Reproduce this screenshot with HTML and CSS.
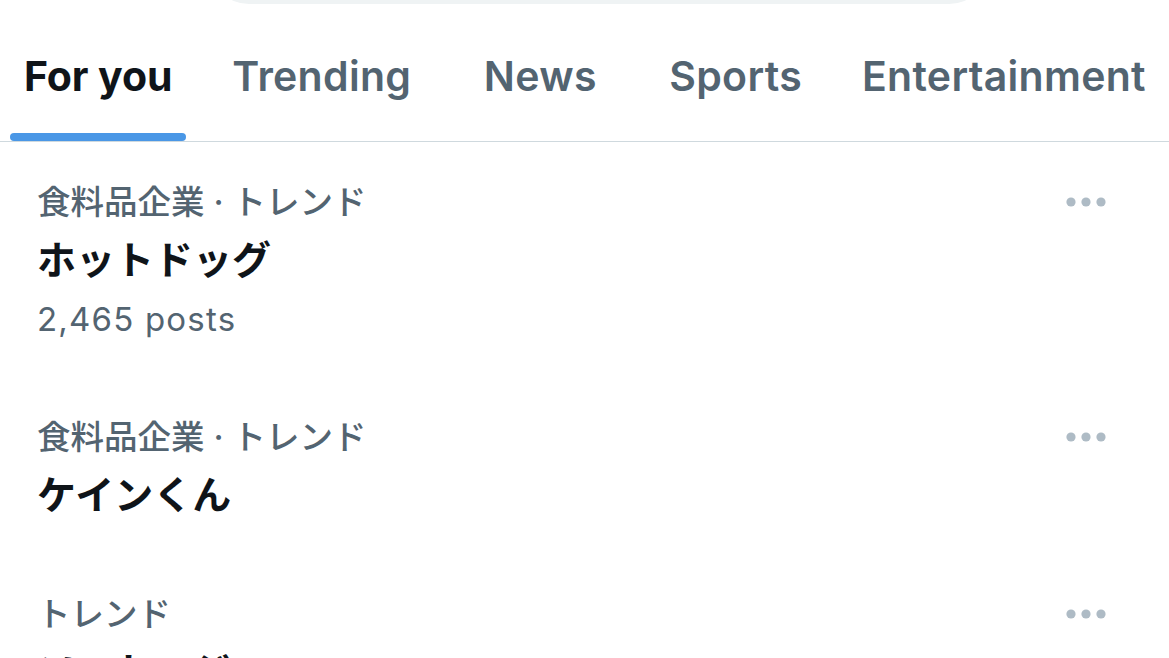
FILE: index.html
```html
<!DOCTYPE html>
<html lang="ja">
<head>
<meta charset="utf-8">
<title>Explore</title>
<link rel="stylesheet" href="styles.css">
</head>
<body>
<header class="header">
  <div class="search"></div>
  <nav class="tabs">
    <a class="tab tab-first is-active"><span class="tab-inner"><span class="tab-label">For you</span><span class="tab-indicator"></span></span></a>
    <a class="tab"><span class="tab-inner"><span class="tab-label">Trending</span></span></a>
    <a class="tab tab-wide"><span class="tab-inner"><span class="tab-label">News</span></span></a>
    <a class="tab"><span class="tab-inner"><span class="tab-label">Sports</span></span></a>
    <a class="tab"><span class="tab-inner"><span class="tab-label">Entertainment</span></span></a>
  </nav>
</header>

<main class="trends">
  <section class="trend">
    <div class="trend-body">
      <div class="trend-meta">食料品企業 · トレンド</div>
      <div class="trend-title">ホットドッグ</div>
      <div class="trend-count">2,465 posts</div>
    </div>
    <button class="more" aria-label="More">
      <svg width="44" height="12" viewBox="0 0 44 12"><circle cx="7" cy="6" r="4.6"/><circle cx="22" cy="6" r="4.6"/><circle cx="37" cy="6" r="4.6"/></svg>
    </button>
  </section>

  <section class="trend">
    <div class="trend-body">
      <div class="trend-meta">食料品企業 · トレンド</div>
      <div class="trend-title">ケインくん</div>
    </div>
    <button class="more" aria-label="More">
      <svg width="44" height="12" viewBox="0 0 44 12"><circle cx="7" cy="6" r="4.6"/><circle cx="22" cy="6" r="4.6"/><circle cx="37" cy="6" r="4.6"/></svg>
    </button>
  </section>

  <section class="trend">
    <div class="trend-body">
      <div class="trend-meta">トレンド</div>
      <div class="trend-title">ソーセージ</div>
    </div>
    <button class="more" aria-label="More">
      <svg width="44" height="12" viewBox="0 0 44 12"><circle cx="7" cy="6" r="4.6"/><circle cx="22" cy="6" r="4.6"/><circle cx="37" cy="6" r="4.6"/></svg>
    </button>
  </section>
</main>
</body>
</html>
```

FILE: styles.css
```css
html, body {
  margin: 0;
  padding: 0;
  background: #ffffff;
}

body {
  font-family: Inter, "Noto Sans CJK JP", "Noto Sans", sans-serif;
  color: #0f1419;
  overflow: hidden;
}

/* Header: search pill (scrolled mostly out of view) and tab strip */
.header {
  background: #ffffff;
}

.search {
  width: 780px;
  height: 80px;
  margin: -76px 0 -4px 209px;
  border-radius: 40px;
  background: #eff3f4;
}

.tabs {
  display: flex;
  height: 141px;
  border-bottom: 1px solid #cfd9de;
  white-space: nowrap;
}

.tab {
  display: flex;
  justify-content: center;
  padding: 0 30px;
  flex: none;
  cursor: pointer;
}

.tab-first {
  padding-left: 24px;
}

.tab-wide {
  min-width: 138px;
}

.tab-inner {
  display: flex;
  flex-direction: column;
  align-items: center;
  height: 100%;
}

.tab-label {
  padding-top: 52px;
  font-size: 41px;
  line-height: 48px;
  font-weight: 600;
  color: #536471;
  letter-spacing: 0.3px;
}

.is-active .tab-label {
  font-weight: 700;
  color: #0f1419;
  letter-spacing: -0.1px;
}

.tab-indicator {
  align-self: stretch;
  margin: auto -14px 0;
  height: 8px;
  border-radius: 4px;
  background: #4a97e6;
}

/* Trend list */
.trend {
  display: flex;
  align-items: flex-start;
  padding: 32px 61px 29px 37px;
}

.trend-body {
  flex: 1;
  min-width: 0;
}

.trend-meta {
  font-size: 33.5px;
  line-height: 56px;
  font-weight: 500;
  color: #536471;
}

.trend-title {
  font-size: 39px;
  line-height: 60px;
  font-weight: 700;
  color: #0f1419;
}

.trend-count {
  font-size: 33px;
  line-height: 58px;
  font-weight: 400;
  letter-spacing: 1.2px;
  color: #536471;
}

.more {
  display: flex;
  align-items: center;
  height: 56px;
  padding: 0;
  border: 0;
  background: none;
  fill: #aebbc5;
}
```
